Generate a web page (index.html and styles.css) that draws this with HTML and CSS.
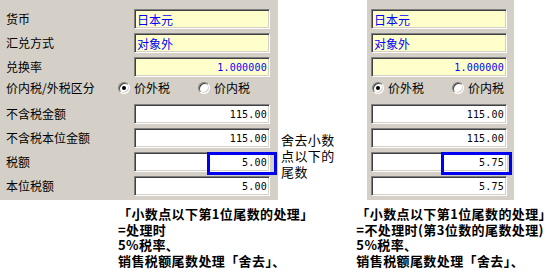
FILE: index.html
```html
<!DOCTYPE html>
<html>
<head>
<meta charset="utf-8">
<link rel="stylesheet" href="styles.css">
</head>
<body>
<div class="page">
  <div class="top">
    <div class="panel panel-left">
      <div class="row"><span class="lbl">货币</span><div class="field yellow">日本元</div></div>
      <div class="row"><span class="lbl">汇兑方式</span><div class="field yellow">对象外</div></div>
      <div class="row"><span class="lbl">兑换率</span><div class="field yellow num blue">1.000000</div></div>
      <div class="row radio-row"><span class="lbl">价内税/外税区分</span>
        <div class="radios">
          <span class="opt"><i class="radio on"></i>价外税</span>
          <span class="opt"><i class="radio"></i>价内税</span>
        </div>
      </div>
      <div class="row"><span class="lbl">不含税金额</span><div class="field num">115.00</div></div>
      <div class="row"><span class="lbl">不含税本位金额</span><div class="field num">115.00</div></div>
      <div class="row"><span class="lbl">税额</span><div class="field num">5.00</div></div>
      <div class="row"><span class="lbl">本位税额</span><div class="field num">5.00</div></div>
      <div class="hl hl-left"></div>
    </div>
    <div class="annot">
      <div class="line">舍去小数</div>
      <div class="line">点以下的</div>
      <div class="line">尾数</div>
    </div>
    <div class="panel panel-right">
      <div class="row"><div class="field yellow">日本元</div></div>
      <div class="row"><div class="field yellow">对象外</div></div>
      <div class="row"><div class="field yellow num blue">1.000000</div></div>
      <div class="row radio-row">
        <div class="radios">
          <span class="opt"><i class="radio on"></i>价外税</span>
          <span class="opt"><i class="radio"></i>价内税</span>
        </div>
      </div>
      <div class="row"><div class="field num">115.00</div></div>
      <div class="row"><div class="field num">115.00</div></div>
      <div class="row"><div class="field num">5.75</div></div>
      <div class="row"><div class="field num">5.75</div></div>
      <div class="hl hl-right"></div>
    </div>
  </div>
  <div class="notes">
    <div class="note note-left">
      <div class="line">「小数点以下第1位尾数的处理」</div>
      <div class="line">=处理时</div>
      <div class="line">5%税率、</div>
      <div class="line">销售税额尾数处理「舍去」、</div>
    </div>
    <div class="note note-right">
      <div class="line">「小数点以下第1位尾数的处理」</div>
      <div class="line">=不处理时(第3位数的尾数处理)</div>
      <div class="line">5%税率、</div>
      <div class="line">销售税额尾数处理「舍去」、</div>
    </div>
  </div>
</div>
</body>
</html>
```
FILE: styles.css
```css
html, body {
  margin: 0;
  padding: 0;
  background: #fff;
}
body {
  font-family: "Noto Sans CJK SC", "Noto Sans", sans-serif;
  font-size: 12px;
  color: #000;
  width: 552px;
  height: 273px;
  overflow: hidden;
}
.top {
  display: flex;
  align-items: flex-start;
}
.panel {
  position: relative;
  background: #d4d0c8;
  height: 200px;
  box-sizing: border-box;
  padding-top: 9px;
  display: flex;
  flex-direction: column;
  gap: 4px;
}
.panel-left {
  width: 278px;
  padding-left: 6px;
}
.panel-right {
  width: 147px;
  padding-left: 4px;
}
.row {
  display: flex;
  align-items: center;
  height: 20px;
}
.lbl {
  width: 128px;
  line-height: 14px;
  white-space: nowrap;
}
.field {
  width: 136px;
  height: 20px;
  box-sizing: border-box;
  background: #fff;
  border: 1px solid;
  border-color: #808080 #fff #fff #808080;
  box-shadow: inset 1px 1px 0 #404040, inset -1px -1px 0 #d4d0c8;
  padding: 2px 3px 0 2px;
  line-height: 15px;
  white-space: nowrap;
  overflow: hidden;
}
.yellow {
  background: #ffffcc;
  color: #0000ff;
}
.num {
  text-align: right;
  font-family: "DejaVu Sans Mono", "Liberation Mono", monospace;
  font-size: 10px;
  line-height: 15px;
  padding-right: 2px;
  letter-spacing: 0.2px;
}
.blue {
  color: #0000ff;
}
.radio-row {
  height: 19px;
  align-items: flex-start;
  padding-top: 1px;
  box-sizing: border-box;
}
.radio-row .lbl {
  line-height: 12px;
}
.radios {
  display: flex;
  padding-left: 2px;
}
.panel-right .radios {
  padding-left: 1px;
}
.opt {
  width: 80px;
  display: flex;
  align-items: center;
  gap: 4px;
  line-height: 12px;
  white-space: nowrap;
}
.radio {
  display: block;
  position: relative;
  width: 12px;
  height: 12px;
  box-sizing: border-box;
  border-radius: 50%;
  background: #fff;
  border: 1px solid;
  border-color: #808080 #fff #fff #808080;
  box-shadow: inset 1px 1px 0 #404040, inset -1px -1px 0 #d4d0c8;
}
.radio.on::after {
  content: "";
  position: absolute;
  left: 3px;
  top: 3px;
  width: 4px;
  height: 4px;
  border-radius: 50%;
  background: #000;
}
.hl {
  position: absolute;
  top: 152px;
  height: 23px;
  box-sizing: border-box;
  border: 3px solid #0000f0;
}
.hl-left {
  left: 207px;
  width: 70px;
}
.hl-right {
  left: 74px;
  width: 71px;
}
.annot {
  width: 89px;
  box-sizing: border-box;
  padding: 132px 0 0 3px;
  font-size: 13px;
  letter-spacing: 0.4px;
}
.annot .line {
  height: 16px;
  line-height: 16px;
  white-space: nowrap;
}
.notes {
  display: flex;
  padding: 6px 0 0 118px;
}
.note {
  font-size: 13px;
  font-weight: bold;
  letter-spacing: 0.4px;
}
.note .line {
  height: 15.7px;
  line-height: 15.7px;
  white-space: nowrap;
}
.note-left {
  width: 242px;
}
```
